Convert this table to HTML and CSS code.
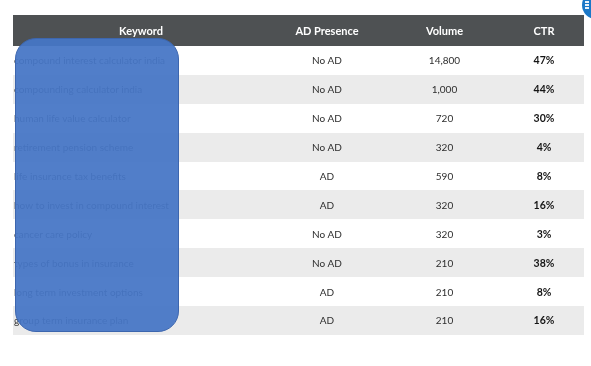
FILE: index.html
```html
<!DOCTYPE html>
<html>
<head>
<meta charset="utf-8">
<link rel="stylesheet" href="styles.css">
</head>
<body>
<div class="page">
  <table class="kw">
    <thead>
      <tr><th class="c-key">Keyword</th><th class="c-ad">AD Presence</th><th class="c-vol">Volume</th><th class="c-ctr">CTR</th></tr>
    </thead>
    <tbody>
      <tr><td class="key">compound interest calculator india</td><td>No AD</td><td>14,800</td><td class="ctr">47%</td></tr>
      <tr><td class="key">compounding calculator india</td><td>No AD</td><td>1,000</td><td class="ctr">44%</td></tr>
      <tr><td class="key">human life value calculator</td><td>No AD</td><td>720</td><td class="ctr">30%</td></tr>
      <tr><td class="key">retirement pension scheme</td><td>No AD</td><td>320</td><td class="ctr">4%</td></tr>
      <tr><td class="key">life insurance tax benefits</td><td>AD</td><td>590</td><td class="ctr">8%</td></tr>
      <tr><td class="key">how to invest in compound interest</td><td>AD</td><td>320</td><td class="ctr">16%</td></tr>
      <tr><td class="key">cancer care policy</td><td>No AD</td><td>320</td><td class="ctr">3%</td></tr>
      <tr><td class="key">types of bonus in insurance</td><td>No AD</td><td>210</td><td class="ctr">38%</td></tr>
      <tr><td class="key">long term investment options</td><td>AD</td><td>210</td><td class="ctr">8%</td></tr>
      <tr><td class="key">group term insurance plan</td><td>AD</td><td>210</td><td class="ctr">16%</td></tr>
    </tbody>
  </table>
  <div class="mask"></div>
  <div class="badge"><span class="dot"></span><span class="dot"></span><span class="dot"></span></div>
</div>
</body>
</html>
```

FILE: styles.css
```css
html, body {
  margin: 0;
  padding: 0;
  background: #ffffff;
}
.page {
  position: relative;
  width: 591px;
  height: 366px;
  overflow: hidden;
  padding: 15px 0 0 13px;
  box-sizing: border-box;
  font-family: Lato, "Open Sans", sans-serif;
}
.kw {
  width: 571px;
  border-collapse: collapse;
  table-layout: fixed;
  will-change: transform;
}
.kw th {
  background: #4e5153;
  color: #ffffff;
  font-weight: 700;
  font-size: 11px;
  height: 31px;
  padding: 0;
  text-align: center;
}
.c-key { width: 256px; }
.c-ad { width: 116px; }
.c-vol { width: 119px; }
.c-ctr { width: 80px; }
.kw td {
  height: 28.9px;
  padding: 0;
  font-size: 10px;
  color: #2e2e2e;
  text-align: center;
  white-space: nowrap;
}
.kw tbody tr:nth-child(even) td {
  background: #ebebeb;
}
.kw td.key {
  text-align: left;
  padding-left: 1px;
  font-size: 10px;
  color: #333333;
}
.kw td.ctr {
  font-weight: 700;
  font-size: 10.5px;
  color: #151515;
}
.mask {
  position: absolute;
  left: 15px;
  top: 38px;
  width: 162px;
  height: 292px;
  background: rgba(70, 118, 198, 0.94);
  border: 1px solid #3d66ae;
  border-radius: 21px;
}
.badge {
  position: absolute;
  left: 582px;
  top: -9px;
  width: 28px;
  height: 28px;
  border-radius: 50%;
  background: #1b78c8;
  display: flex;
  flex-direction: column;
  gap: 1px;
  padding: 10px 0 0 3px;
  box-sizing: border-box;
}
.dot {
  display: block;
  width: 4px;
  height: 2px;
  background: #e8f1fa;
}
```
